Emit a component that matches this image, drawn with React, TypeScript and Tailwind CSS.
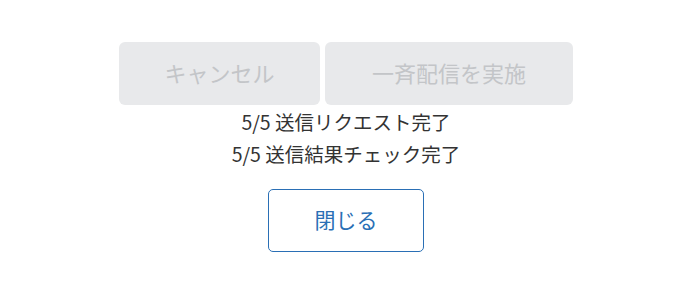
import React from "react";

export default function App() {
  return (
    <div
      className="w-[692px] h-[282px] bg-white flex flex-col items-center pt-[42px]"
      style={{ fontFamily: '"Noto Sans CJK JP", "Noto Sans", sans-serif' }}
    >
      <div className="flex gap-[5px]">
        <button className="w-[201px] h-[63px] rounded-[6px] bg-[#e8e9eb] text-[#c3c5c8] text-[22px] flex items-center justify-center pb-[2px]">
          キャンセル
        </button>
        <button className="w-[248px] h-[63px] rounded-[6px] bg-[#e8e9eb] text-[#c3c5c8] text-[22px] flex items-center justify-center pb-[2px]">
          一斉配信を実施
        </button>
      </div>
      <div className="mt-[1px] flex flex-col items-center text-[19.5px] leading-[32px] text-[#333333]">
        <div>5/5 送信リクエスト完了</div>
        <div>5/5 送信結果チェック完了</div>
      </div>
      <button className="mt-[19px] w-[156px] h-[63px] rounded-[5px] border border-[#2a6fb5] text-[#2a6fb5] text-[21px] flex items-center justify-center bg-white pb-[1px]">
        閉じる
      </button>
    </div>
  );
}
